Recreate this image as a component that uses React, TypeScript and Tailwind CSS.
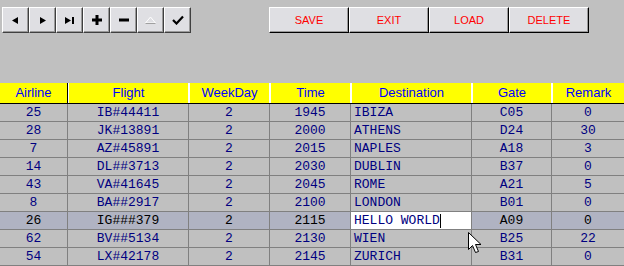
import React from 'react'

type Row = {
  airline: string
  flight: string
  weekDay: string
  time: string
  dest: string
  gate: string
  remark: string
}

const rows: Row[] = [
  { airline: '25', flight: 'IB#44411', weekDay: '2', time: '1945', dest: 'IBIZA', gate: 'C05', remark: '0' },
  { airline: '28', flight: 'JK#13891', weekDay: '2', time: '2000', dest: 'ATHENS', gate: 'D24', remark: '30' },
  { airline: '7', flight: 'AZ#45891', weekDay: '2', time: '2015', dest: 'NAPLES', gate: 'A18', remark: '3' },
  { airline: '14', flight: 'DL##3713', weekDay: '2', time: '2030', dest: 'DUBLIN', gate: 'B37', remark: '0' },
  { airline: '43', flight: 'VA#41645', weekDay: '2', time: '2045', dest: 'ROME', gate: 'A21', remark: '5' },
  { airline: '8', flight: 'BA##2917', weekDay: '2', time: '2100', dest: 'LONDON', gate: 'B01', remark: '0' },
  { airline: '26', flight: 'IG###379', weekDay: '2', time: '2115', dest: 'HELLO WORLD', gate: 'A09', remark: '0' },
  { airline: '62', flight: 'BV##5134', weekDay: '2', time: '2130', dest: 'WIEN', gate: 'B25', remark: '22' },
  { airline: '54', flight: 'LX#42178', weekDay: '2', time: '2145', dest: 'ZURICH', gate: 'B31', remark: '0' }
]

const EDIT_ROW = 6

//** Navigator icons */
const navIcons = [
  <svg width="9" height="9" viewBox="0 0 9 9"><path d="M1 4.5 L7 1 L7 8 Z" fill="#000" /></svg>,
  <svg width="9" height="9" viewBox="0 0 9 9"><path d="M2 1 L8 4.5 L2 8 Z" fill="#000" /></svg>,
  <svg width="11" height="9" viewBox="0 0 11 9"><path d="M1 1 L7 4.5 L1 8 Z" fill="#000" /><rect x="8" y="1" width="2" height="7" fill="#000" /></svg>,
  <svg width="10" height="10" viewBox="0 0 10 10"><rect x="3.5" y="0" width="3" height="10" fill="#000" /><rect x="0" y="3.5" width="10" height="3" fill="#000" /></svg>,
  <svg width="10" height="10" viewBox="0 0 10 10"><rect x="0" y="3.5" width="10" height="3" fill="#000" /></svg>,
  <svg width="13" height="8" viewBox="0 0 13 8"><path d="M1.5 7 L6.5 1 L11.5 7 Z" fill="none" stroke="#fff" strokeWidth="1" /><path d="M1.5 7.5 L11.5 7.5" stroke="#a0a0a0" strokeWidth="1" /></svg>,
  <svg width="12" height="10" viewBox="0 0 12 10"><path d="M1 5 L4.5 8.5 L11 1.5" fill="none" stroke="#000" strokeWidth="2.2" /></svg>
]

const colWidths = ['w-[68px]', 'w-[121px]', 'w-[81px]', 'w-[81px]', 'w-[121px]', 'w-[80px]', 'flex-1']
const headers = ['Airline', 'Flight', 'WeekDay', 'Time', 'Destination', 'Gate', 'Remark']

export default function App() {
  return (
    <div className="relative w-[624px] h-[266px] overflow-hidden bg-[#c0c0c0]">
      {/* toolbar */}
      <div className="flex pt-[7px]">
        <div className="flex pl-[2px]">
          {navIcons.map((icon, i) => (
            <button
              key={i}
              className="w-[27px] h-[26px] flex items-center justify-center bg-[#dfdfe3] border-t border-l border-white border-r border-b border-r-[#404040] border-b-[#404040] shadow-[inset_-1px_-1px_#9a9a9a]">
              {icon}
            </button>
          ))}
        </div>
        <div className="flex ml-[78px]">
          {['SAVE', 'EXIT', 'LOAD', 'DELETE'].map((label) => (
            <button
              key={label}
              className="w-[80px] h-[26px] flex items-center justify-center bg-[#dfdfe3] border-t border-l border-white border-r border-b border-r-[#000] border-b-[#000] shadow-[inset_-1px_-1px_#9a9a9a] text-[11px] text-[#ff0000] font-['Liberation_Sans',sans-serif]">
              {label}
            </button>
          ))}
        </div>
      </div>

      {/* grid */}
      <div className="mt-[50px]">
        <div className="flex h-[21px] bg-[#ffff00] border-b border-black">
          {headers.map((h, i) => (
            <div
              key={h}
              className={`${colWidths[i]} flex items-center justify-center text-[13px] text-[#0000ff] font-['Liberation_Sans',sans-serif] ${i < 6 ? 'border-r border-black' : ''} ${i > 0 ? 'border-l border-white' : ''}`}>
              {h}
            </div>
          ))}
        </div>
        {rows.map((r, idx) => {
          const active = idx === EDIT_ROW
          const cells = [r.airline, r.flight, r.weekDay, r.time, r.dest, r.gate, r.remark]
          return (
            <div
              key={idx}
              className={`flex h-[18px] border-b border-[#808080] font-['Liberation_Mono',monospace] text-[13px] ${active ? 'bg-[#b0b3c2] text-black' : 'text-[#000080]'}`}>
              {cells.map((c, i) => (
                <div
                  key={i}
                  className={`${colWidths[i]} flex items-center ${i < 6 ? 'border-r border-[#808080]' : ''} ${i === 4 ? 'justify-start' : 'justify-center'}`}>
                  {i === 4 && active ? (
                    <div className="w-full h-full bg-white text-[#000080] flex items-center pl-[3px]">
                      {c}
                      <span className="w-px h-[14px] bg-black" />
                    </div>
                  ) : i === 4 ? (
                    <span className="pl-[3px]">{c}</span>
                  ) : (
                    c
                  )}
                </div>
              ))}
            </div>
          )
        })}
      </div>

      {/* mouse pointer */}
      <svg className="absolute left-[468px] top-[232px]" width="15" height="24" viewBox="0 0 15 24">
        <path d="M0.5 0.5 L0.5 17.5 L4.5 13.5 L7.5 20.5 L10.5 19.5 L7.5 12.5 L13 12.5 Z" fill="#fff" stroke="#000" strokeWidth="1" />
      </svg>
    </div>
  )
}
